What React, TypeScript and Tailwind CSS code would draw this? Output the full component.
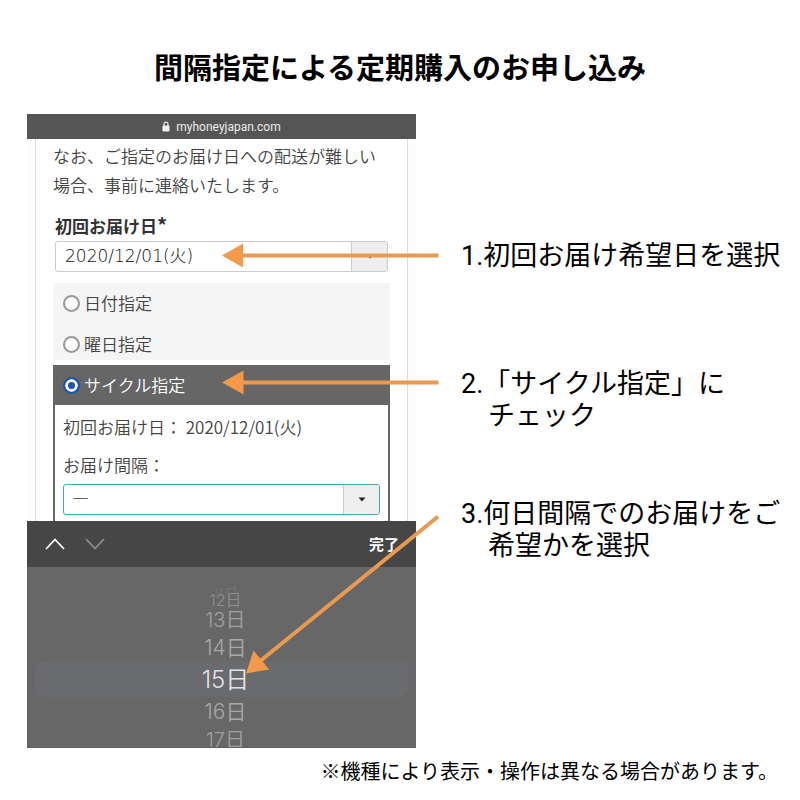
import { useState } from "react";
import { clsx } from "clsx";

const days = [
  { label: "11日", style: "h-1.5 text-[14px] leading-[14px] text-[#747474]" },
  { label: "12日", style: "h-3.5 text-[16px] leading-[14px] text-[#8e8e8e]" },
  { label: "13日", style: "h-[26px] text-[20px] leading-[26px] text-[#a0a0a0]" },
  { label: "14日", style: "h-7 text-[21px] leading-[30px] text-[#a8a8a8]" },
  { label: "15日", style: "h-9 text-[24px] leading-[38px] text-[#e4e4e4]" },
  { label: "16日", style: "h-7 text-[21px] leading-[30px] text-[#a8a8a8]" },
  { label: "17日", style: "h-[22px] text-[20px] leading-[30px] text-[#a0a0a0]" },
];

const types = [
  { id: "date", label: "日付指定" },
  { id: "week", label: "曜日指定" },
];

function LockIcon() {
  return (
    <svg width="8" height="11" viewBox="0 0 8 11" aria-hidden="true">
      <path d="M2 5V3.2a2 2 0 0 1 4 0V5" fill="none" stroke="#f0f0f0" strokeWidth="1.2" />
      <rect x="0.5" y="4.6" width="7" height="5.8" rx="1" fill="#f0f0f0" />
    </svg>
  );
}

function Caret() {
  return (
    <svg width="8" height="5" viewBox="0 0 8 5" aria-hidden="true">
      <path d="M0.5 0.5h7L4 4.5z" fill="#222" />
    </svg>
  );
}

function Radio({ id, label, checked, onChange, active }: {
  id: string;
  label: string;
  checked: boolean;
  onChange: () => void;
  active?: boolean;
}) {
  return (
    <div className="flex items-center gap-1 leading-5">
      <input
        type="radio"
        id={id}
        name="delivery"
        checked={checked}
        onChange={onChange}
        className={clsx(
          "size-[17px] shrink-0 appearance-none rounded-full border-2",
          checked
            ? "border-[#1c55ad] bg-[#1c55ad] shadow-[inset_0_0_0_3px_#fff]"
            : "border-[#999] bg-white"
        )}
      />
      <label htmlFor={id} className={active ? "text-white" : "text-[#444]"}>
        {label}
      </label>
    </div>
  );
}

function Arrows() {
  return (
    <svg
      className="pointer-events-none absolute top-0 -right-[23px]"
      width="223"
      height="634"
      viewBox="216 114 223 634"
      fill="#f2994a"
      stroke="#ea9a50"
      aria-hidden="true"
    >
      <path d="M240 255.5H438.5" strokeWidth="4" />
      <path d="M222 255.5L243 243.5V267.5z" stroke="none" />
      <path d="M240 382.5H438.5" strokeWidth="4" />
      <path d="M222 382.5L243.5 370.5V394.5z" stroke="none" />
      <path d="M438 516.5L259 662" strokeWidth="4" />
      <path d="M246 673.5L253.5 650.5L269 669.5z" stroke="none" />
    </svg>
  );
}

function Phone() {
  const [type, setType] = useState("cycle");
  const [day, setDay] = useState("15日");

  return (
    <div className="relative min-w-0 bg-[#fcfcfc] text-[17px]">
      <div className="flex h-[25px] items-center justify-center gap-1.5 bg-[#555] font-['Roboto',sans-serif] text-[12px] text-[#ececec]">
        <LockIcon />
        <span>myhoneyjapan.com</span>
      </div>

      <div className="mx-2 border-x border-[#ddd] bg-white px-[17px] pt-0.5 font-[350] text-[#444]">
        <p className="leading-[29px]">
          なお、ご指定のお届け日への配送が難しい
          <br />
          場合、事前に連絡いたします。
        </p>

        <label htmlFor="first-date" className="mt-[15px] block pl-0.5 font-bold leading-6 text-[#333]">
          初回お届け日<span className="text-[20px] leading-none">*</span>
        </label>
        <div className="mt-[3px] mr-0.5 ml-0.5 flex h-[31px] overflow-hidden rounded-[3px] border border-[#ccc]">
          <select
            id="first-date"
            className="min-w-0 flex-1 appearance-none pl-[9px] font-['DejaVu_Sans','Noto_Sans_CJK_JP',sans-serif] font-extralight text-[#111]"
          >
            <option>2020/12/01(火)</option>
          </select>
          <span className="flex w-9 items-center justify-center border-l border-[#ccc] bg-[#eee]">
            <Caret />
          </span>
        </div>

        <div className="mt-[11px] flex flex-col gap-[21px] bg-[#f5f5f5] px-2.5 pt-2.5 pb-1.5">
          {types.map((item) => (
            <Radio
              key={item.id}
              id={item.id}
              label={item.label}
              checked={type === item.id}
              onChange={() => setType(item.id)}
            />
          ))}
        </div>

        <div className="mt-[5px] border-x-2 border-[#666]">
          <div className="bg-[#666] px-2 py-2.5">
            <Radio
              id="cycle"
              label="サイクル指定"
              checked={type === "cycle"}
              onChange={() => setType("cycle")}
              active
            />
          </div>
          <div className="px-2 pt-2.5 pb-1.5 leading-6">
            <p>初回お届け日： 2020/12/01(火)</p>
            <label htmlFor="interval" className="mt-3.5 block">
              お届け間隔：
            </label>
            <div className="mt-[7px] flex h-[31px] overflow-hidden rounded-[3px] border border-[#4aa5b5]">
              <select id="interval" className="min-w-0 flex-1 appearance-none pb-1 pl-2">
                <option>―</option>
              </select>
              <span className="flex w-9 items-center justify-center border-l border-[#ccc] bg-[#eee]">
                <Caret />
              </span>
            </div>
          </div>
        </div>
      </div>

      <div className="flex h-[46px] items-center bg-[#464646] pr-[17px] pl-[18px]">
        <button type="button" aria-label="前へ" className="mr-5">
          <svg width="20" height="12" viewBox="0 0 20 12" fill="none" stroke="#fff" strokeWidth="1.8">
            <path d="M1 11L10 1.5L19 11" />
          </svg>
        </button>
        <button type="button" aria-label="次へ">
          <svg width="20" height="12" viewBox="0 0 20 12" fill="none" stroke="#8c8c8c" strokeWidth="1.8">
            <path d="M1 1L10 10.5L19 1" />
          </svg>
        </button>
        <button type="button" className="ml-auto text-[15px] font-bold text-white">
          完了
        </button>
      </div>

      <div className="flex h-[181px] flex-col overflow-hidden border-b border-[#5c5c5c] bg-[#676767] px-2 pt-5">
        {days.map((item) => (
          <button
            key={item.label}
            type="button"
            onClick={() => setDay(item.label)}
            className={clsx(
              "flex shrink-0 items-start justify-center rounded-lg pl-2 font-['Inter','Noto_Sans_CJK_JP',sans-serif] font-[350]",
              item.label === "11日" && "overflow-hidden",
              item.label === day && "bg-[#6a6b6e]",
              item.style
            )}
          >
            {item.label}
          </button>
        ))}
      </div>

      <Arrows />
    </div>
  );
}

export default function App() {
  return (
    <main className="bg-white pt-[46px] pb-4 font-['Noto_Sans_CJK_JP',sans-serif] text-black" lang="ja">
      <h1 className="mb-7 text-center text-[29px] leading-10 font-bold">
        間隔指定による定期購入のお申し込み
      </h1>

      <div className="grid grid-cols-[389fr_339fr] gap-[45px] pl-[27px]">
        <Phone />
        <ol className="pt-[126px] font-['Roboto','Noto_Sans_CJK_JP',sans-serif] text-[27px] leading-8 whitespace-nowrap">
          <li>1.初回お届け希望日を選択</li>
          <li className="mt-24">
            2.「サイクル指定」に
            <span className="block pl-[27px]">チェック</span>
          </li>
          <li className="mt-[66px]">
            3.何日間隔でのお届けをご
            <span className="block pl-[27px]">希望かを選択</span>
          </li>
        </ol>
      </div>

      <p className="mt-[9px] pr-[22px] text-right text-[20px] leading-7">
        ※機種により表示・操作は異なる場合があります。
      </p>
    </main>
  );
}
